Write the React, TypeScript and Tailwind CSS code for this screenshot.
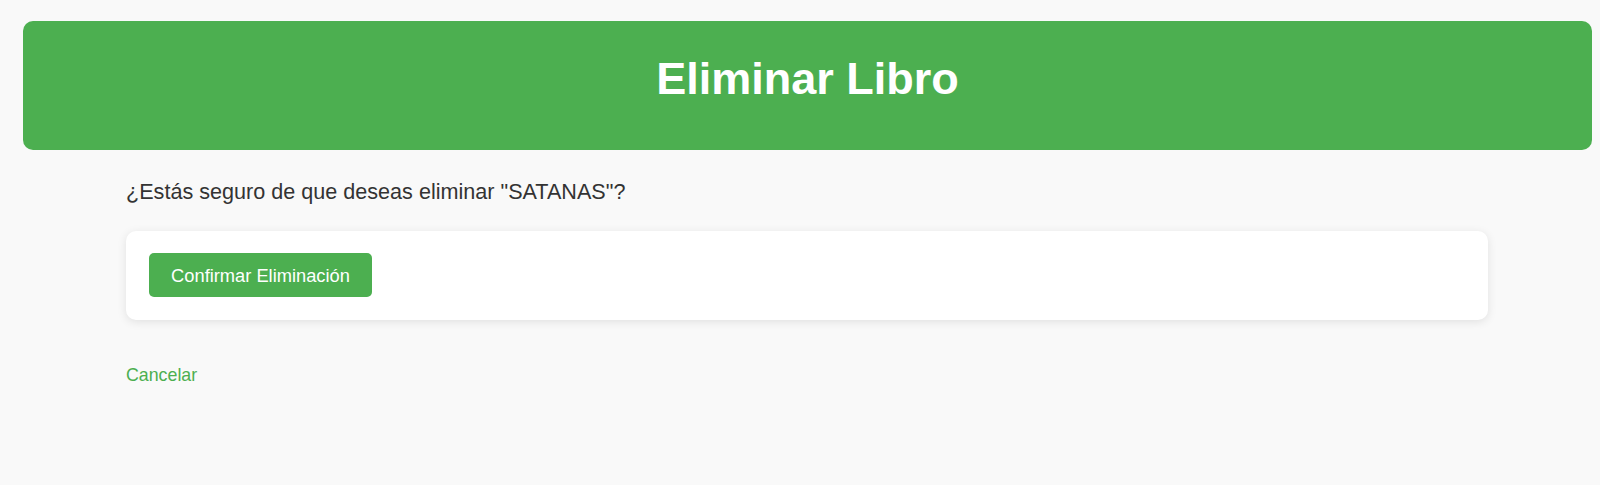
export default function App() {
  return (
    <div className="min-h-[485px] bg-[#f9f9f9] pt-[21px] font-['Liberation_Sans',Arial,sans-serif] text-[#333]">
      <header className="ml-[23px] mr-[8px] rounded-[10px] bg-[#4caf50] pt-[32px] pb-[45px] text-center">
        <h1 className="text-[45px] font-bold leading-[52px] text-white">Eliminar Libro</h1>
      </header>

      <main className="ml-[126px] w-[1362px]">
        <p className="mt-[30px] text-[21.6px] leading-[24px]">
          ¿Estás seguro de que deseas eliminar "SATANAS"?
        </p>

        <div className="mt-[27px] rounded-[10px] bg-white pt-[22px] pb-[23px] pl-[23px] shadow-[0_2px_10px_rgba(0,0,0,0.1)]">
          <button className="flex h-[44px] w-[223px] items-center justify-center rounded-[5px] bg-[#4caf50] pt-[1px] text-[18.3px] text-white">
            Confirmar Eliminación
          </button>
        </div>

        <a href="#" className="mt-[45px] block w-fit text-[17.8px] leading-[20px] text-[#4caf50]">
          Cancelar
        </a>
      </main>
    </div>
  )
}
